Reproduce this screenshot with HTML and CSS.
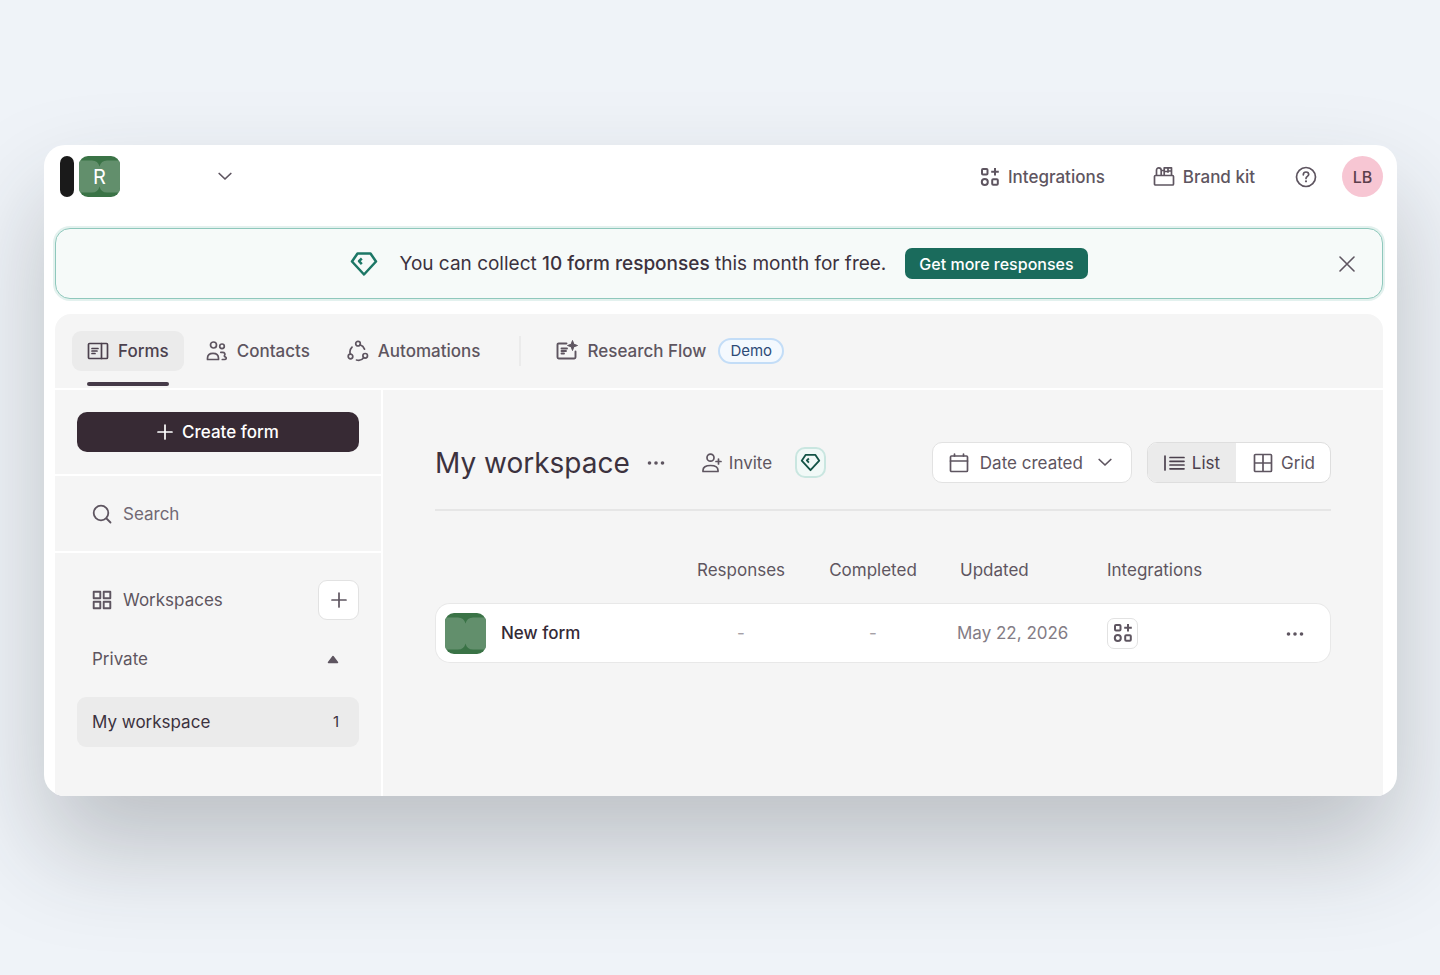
FILE: index.html
```html
<!DOCTYPE html>
<html lang="en">
<head>
<meta charset="utf-8">
<meta name="viewport" content="width=device-width, initial-scale=1">
<title>My workspace</title>
<link rel="stylesheet" href="styles.css">
</head>
<body>
<svg class="sprite" aria-hidden="true">
  <symbol id="apps" viewBox="0 0 20 20"><g fill="none" stroke="currentColor" stroke-width="2"><rect x="2" y="2" width="5.5" height="5.5" rx="1"/><path d="M15 1v7.500M11.200 4.700h7.600"/><circle cx="4.800" cy="15" r="3"/><rect x="12.200" y="12.200" width="5.600" height="5.600" rx="1"/></g></symbol>
  <symbol id="gem" viewBox="0 0 28 26"><g fill="none" stroke="currentColor" stroke-width="2.500" stroke-linejoin="round"><path d="M7.500 2.500h13L26 10.500 14 23.500 2 10.500z"/><path d="M11.800 7.500 9 10.200l2.800 3"/></g></symbol>
  <symbol id="plus" viewBox="0 0 16 16"><path d="M8 1v14M1 8h14" fill="none" stroke="currentColor" stroke-width="1.700" stroke-linecap="round"/></symbol>
  <symbol id="chevron" viewBox="0 0 14 9"><path d="m1.200 1.500 5.800 5.500 5.800-5.500" fill="none" stroke="currentColor" stroke-width="1.700" stroke-linecap="round" stroke-linejoin="round"/></symbol>
  <symbol id="dots" viewBox="0 0 18 6"><g fill="currentColor"><circle cx="2.500" cy="3" r="1.800"/><circle cx="9" cy="3" r="1.800"/><circle cx="15.500" cy="3" r="1.800"/></g></symbol>
  <symbol id="tile" viewBox="0 0 41 41"><rect width="41" height="41" fill="#3a7346"/><path d="M0 4.500h13c4 0 6.500 2 7.500 6 1-4 3.500-6 7.500-6h13v32H28c-4 0-6.500-2-7.500-6-1 4-3.500 6-7.500 6H0z" fill="#628f6c"/></symbol>
</svg>
<div class="window">
  <header class="topbar">
    <div class="account">
      <span class="rail"></span>
      <span class="org"><svg class="org-art"><use href="#tile"/></svg><span class="org-letter">R</span></span>
      <button class="plain org-toggle" aria-label="Switch account"><svg class="ico-chevron"><use href="#chevron"/></svg></button>
    </div>
    <nav class="top-links">
      <a class="top-link" href="#"><svg class="ico-20"><use href="#apps"/></svg>Integrations</a>
      <a class="top-link" href="#"><svg class="ico-22" viewBox="0 0 22 22"><g fill="none" stroke="currentColor" stroke-width="1.700" stroke-linejoin="round"><rect x="1.500" y="9.500" width="19" height="9.500" rx="1"/><path d="M3.500 9.500V4.300C3.500 2.800 4.500 1.800 5.800 1.800s2.400 1 2.400 2.500v5.200M8.200 4.500h3M11.200 9.500V1.800h7.300v7.700M11.200 5.500h3.300M15 1.800v5M15 5h3.300"/></g></svg>Brand kit</a>
      <button class="plain help" aria-label="Help"><svg class="ico-22" viewBox="0 0 22 22"><circle cx="11" cy="11" r="9.500" fill="none" stroke="currentColor" stroke-width="1.700"/><path d="M8.300 8.800C8.300 7 9.400 6 11 6s2.700 1 2.700 2.500c0 1.900-2.700 2-2.700 4" fill="none" stroke="currentColor" stroke-width="1.700" stroke-linecap="round"/><circle cx="11" cy="15.300" r="1.100" fill="currentColor"/></svg></button>
      <button class="plain avatar">LB</button>
    </nav>
  </header>

  <section class="banner">
    <svg class="banner-gem"><use href="#gem"/></svg>
    <p class="banner-text">You can collect <strong>10 form responses</strong> this month for free.</p>
    <button class="plain upgrade">Get more responses</button>
    <button class="plain banner-close" aria-label="Dismiss"><svg class="ico-16" viewBox="0 0 16 16"><path d="m1 1 14 14M15 1 1 15" fill="none" stroke="currentColor" stroke-width="1.600" stroke-linecap="round"/></svg></button>
  </section>

  <div class="panel">
    <nav class="tabs">
      <a class="tab tab-active" href="#"><svg class="ico-22" viewBox="0 0 22 22"><g fill="none" stroke="currentColor" stroke-width="1.700" stroke-linejoin="round" stroke-linecap="round"><rect x="1.500" y="3.500" width="19" height="15" rx="1"/><path d="M14.500 3.500v15M5 8.500h6M5 11h5M5 13.500h3"/></g></svg>Forms</a>
      <a class="tab" href="#"><svg class="ico-22" viewBox="0 0 22 22"><g fill="none" stroke="currentColor" stroke-width="1.700" stroke-linejoin="round" stroke-linecap="round"><circle cx="7.500" cy="5" r="3"/><path d="M1.500 19.500v-1.300c0-3 2.200-4.900 5.500-4.900s5.500 1.900 5.500 4.900v1.300z"/><circle cx="16" cy="6.300" r="2.300"/><path d="M14.800 12.300h1.700c2.300 0 3 1.700 2 3.200-.5.800.2 1.200 1 1.500 1.200.5 1 2.500-1 2.500h-2.200"/></g></svg>Contacts</a>
      <a class="tab" href="#"><svg class="ico-22" viewBox="0 0 22 22"><g fill="none" stroke="currentColor" stroke-width="1.700" stroke-linecap="round"><circle cx="11" cy="3.700" r="2.300"/><circle cx="3.500" cy="16.500" r="2.300"/><circle cx="18.200" cy="15.800" r="2.300"/><path d="M13 4.800c2.300.8 3.800 2.300 4.500 4.300M3.300 14C2.500 11.500 3.200 9 5 7.200M9.500 20c2.800.8 5.500 0 7.200-2.300"/></g></svg>Automations</a>
      <span class="tab-rule"></span>
      <a class="tab tab-flow" href="#"><svg class="ico-22" viewBox="0 0 22 22"><g fill="none" stroke="currentColor" stroke-width="1.900" stroke-linecap="round" stroke-linejoin="round"><path d="M10.500 3.500H2.700c-.7 0-1.200.4-1.200 1.200v12.600c0 .8.500 1.200 1.200 1.200h15.600c.7 0 1.200-.4 1.200-1.200v-5.800"/><path d="M5.500 8.500h5.500M5.500 11h4.500M5.500 13.500h2.500"/></g><path d="m16.500.5 1.300 3.700 3.700 1.300-3.700 1.300-1.300 3.700-1.300-3.700-3.700-1.300 3.700-1.300z" fill="currentColor" stroke="currentColor" stroke-linejoin="round"/></svg>Research Flow<span class="demo">Demo</span></a>
    </nav>

    <div class="body">
      <aside class="sidebar">
        <div class="side-create"><button class="plain create"><svg class="ico-16"><use href="#plus"/></svg>Create form</button></div>
        <label class="side-search"><svg class="ico-20" viewBox="0 0 20 20"><g fill="none" stroke="currentColor" stroke-width="1.800" stroke-linecap="round"><circle cx="9" cy="9" r="7.300"/><path d="m14.500 14.500 4 4"/></g></svg><input class="search-input" type="search" placeholder="Search" aria-label="Search"></label>
        <div class="side-list">
          <div class="side-head">
            <svg class="ico-20" viewBox="0 0 20 20"><g fill="none" stroke="currentColor" stroke-width="1.900" stroke-linejoin="round"><rect x="1.700" y="1.700" width="6.600" height="6.600"/><rect x="11.700" y="1.700" width="6.600" height="6.600"/><rect x="1.700" y="11.700" width="6.600" height="6.600"/><rect x="11.700" y="11.700" width="6.600" height="6.600"/></g></svg>
            <span>Workspaces</span>
            <button class="plain add" aria-label="Add workspace"><svg class="ico-16"><use href="#plus"/></svg></button>
          </div>
          <button class="plain group"><span>Private</span><svg class="caret" viewBox="0 0 12 9"><path d="M6 1.500 10.500 7.500h-9z" fill="currentColor" stroke="currentColor" stroke-width="1.500" stroke-linejoin="round"/></svg></button>
          <a class="space" href="#"><span>My workspace</span><span class="count">1</span></a>
        </div>
      </aside>

      <main class="main">
        <div class="main-head">
          <h1 class="title">My workspace</h1>
          <button class="plain more" aria-label="Workspace options"><svg class="ico-dots"><use href="#dots"/></svg></button>
          <button class="plain invite"><svg class="ico-20" viewBox="0 0 20 20"><g fill="none" stroke="currentColor" stroke-width="1.700" stroke-linejoin="round" stroke-linecap="round"><circle cx="8.500" cy="4.700" r="3.500"/><path d="M1 18.500v-1.200c0-3 2.600-4.800 7.500-4.800s7.500 1.800 7.500 4.800v1.200z"/><path d="M16.500 6v5M14 8.500h5"/></g></svg>Invite</button>
          <button class="plain gem-chip" aria-label="Upgrade"><svg class="chip-gem"><use href="#gem"/></svg></button>
          <div class="controls">
            <label class="sort"><svg class="ico-20" viewBox="0 0 20 20"><g fill="none" stroke="currentColor" stroke-width="1.700" stroke-linecap="round" stroke-linejoin="round"><rect x="1.500" y="3" width="17" height="15.500" rx="1"/><path d="M1.500 8h17M5.500 1v2M14.500 1v2"/></g></svg><select class="sort-select" aria-label="Sort by"><option>Date created</option></select><svg class="ico-chevron"><use href="#chevron"/></svg></label>
            <div class="view" role="group" aria-label="View">
              <button class="plain view-btn view-on" aria-pressed="true"><svg class="ico-22" viewBox="0 0 22 22"><path d="M2 4v14M7 5.500h14M7 9.300h14M7 13h14M7 16.800h14" fill="none" stroke="currentColor" stroke-width="1.700" stroke-linecap="round"/></svg>List</button>
              <button class="plain view-btn" aria-pressed="false"><svg class="ico-20" viewBox="0 0 20 20"><path d="M1.500 2.500a1 1 0 0 1 1-1h15a1 1 0 0 1 1 1v15a1 1 0 0 1-1 1h-15a1 1 0 0 1-1-1zM10 1.500v17M1.500 10h17" fill="none" stroke="currentColor" stroke-width="1.700"/></svg>Grid</button>
            </div>
          </div>
        </div>
        <table class="forms">
          <colgroup><col><col class="c-num"><col class="c-num"><col class="c-date"><col class="c-int"><col class="c-more"></colgroup>
          <thead><tr><th></th><th class="mid">Responses</th><th class="mid">Completed</th><th class="upd">Updated</th><th>Integrations</th><th></th></tr></thead>
          <tbody><tr>
            <td><a class="form-link" href="#"><svg class="form-art"><use href="#tile"/></svg>New form</a></td>
            <td class="mid faint">-</td><td class="mid faint">-</td><td class="date">May 22, 2026</td>
            <td><button class="plain int-btn" aria-label="Add integration"><svg class="ico-20"><use href="#apps"/></svg></button></td>
            <td class="mid"><button class="plain more" aria-label="Form options"><svg class="ico-dots"><use href="#dots"/></svg></button></td>
          </tr></tbody>
        </table>
      </main>
    </div>
  </div>
</div>
</body>
</html>
```
FILE: styles.css
```css
* { box-sizing: border-box; }
body {
  margin: 0;
  min-height: 100vh;
  padding: 145px 43px 179px 44px;
  background: #eff3f8;
  color: #5e5560;
  font: 400 17px/24px Inter, "Liberation Sans", sans-serif;
}
.sprite { position: absolute; width: 0; height: 0; }
svg { flex: none; display: block; }
a { color: inherit; text-decoration: none; }
.plain { margin: 0; padding: 0; border: 0; background: none; color: inherit; font: inherit; cursor: pointer; }
.ico-16 { width: 16px; height: 16px; }
.ico-20 { width: 20px; height: 20px; }
.ico-22 { width: 22px; height: 22px; }
.ico-chevron { width: 14px; height: 9px; }
.ico-dots { width: 18px; height: 6px; }

.window {
  overflow: hidden;
  border-radius: 21px;
  background: #fff;
  box-shadow: 0 52px 100px rgba(40, 44, 48, .25);
}

/* Top bar */
.topbar { display: flex; align-items: center; justify-content: space-between; padding: 11px 14px 11px 16px; }
.account { display: flex; align-items: center; }
.rail { width: 14px; height: 41px; border-radius: 7px; background: #1a1a1a; }
.org { display: grid; place-items: center; width: 41px; height: 41px; margin-left: 5px; overflow: hidden; border-radius: 9px; color: #fff; font-size: 20px; }
.org > * { grid-area: 1 / 1; }
.org-art { width: 41px; height: 41px; }
.org-toggle { margin-left: 98px; }
.top-links { display: flex; align-items: center; font-weight: 500; }
.top-link { display: flex; align-items: center; gap: 8px; margin-right: 48px; }
.top-link + .top-link { margin-right: 40px; }
.help { margin-right: 25px; }
.avatar { width: 41px; height: 41px; border-radius: 50%; background: #f7c6d3; color: #5c3f4c; font-size: 16px; font-weight: 500; }

/* Banner */
.banner {
  display: flex;
  position: relative;
  align-items: center;
  justify-content: center;
  height: 71px;
  margin: 20px 14px 0 11px;
  border: 1px solid #8fc8bc;
  border-radius: 15px;
  background: #f6faf9;
  box-shadow: 0 0 0 2px #e3f1ee;
  color: #3c323e;
  font-size: 19px;
}
.banner-gem { width: 28px; height: 26px; margin-right: 21px; color: #1c7766; }
.banner-text { margin: 0; }
.banner-text strong { font-weight: 500; }
.upgrade { height: 31px; margin-left: 19px; padding: 0 14px; border-radius: 7px; background: #1a6b5c; color: #fff; font-size: 16px; font-weight: 500; }
.banner-close { position: absolute; right: 27px; color: #5e5560; }

/* Panel */
.panel { margin: 15px 14px 0 11px; border-radius: 16px 16px 0 0; background: #f5f5f5; }
.tabs { display: flex; align-items: flex-start; padding: 17px 17px 0; border-bottom: 2px solid #fff; font-weight: 500; }
.tab { display: flex; align-items: center; gap: 9px; height: 40px; margin-bottom: 17px; padding: 0 15px; }
.tab + .tab { margin-left: 7px; }
.tab-active { position: relative; border-radius: 9px; background: #ebebeb; color: #4c414e; }
.tab-active::after { content: ""; position: absolute; right: 15px; bottom: -15px; left: 15px; height: 4px; border-radius: 2px; background: #463b49; }
.tab-rule { width: 2px; height: 30px; margin: 5px 20px 0 24px; background: #ebebeb; }
.demo { margin-left: 3px; padding: 0 10px; border: 2px solid #c3ddf7; border-radius: 13px; background: #f4f9fe; color: #2d4b77; font-size: 15px; font-weight: 400; line-height: 22px; }
.body { display: flex; align-items: stretch; }

/* Sidebar */
.sidebar { width: 328px; flex: none; border-right: 2px solid #fff; }
.side-create { padding: 22px; border-bottom: 2px solid #fff; }
.create { display: flex; align-items: center; justify-content: center; gap: 9px; width: 100%; height: 40px; border-radius: 10px; background: #372a34; color: #fff; font-weight: 500; }
.side-search { display: flex; align-items: center; gap: 11px; height: 77px; padding: 0 22px 0 37px; border-bottom: 2px solid #fff; }
.search-input { min-width: 0; flex: 1; padding: 0; border: 0; outline: 0; background: none; color: inherit; font: inherit; }
.search-input::placeholder { color: #716974; opacity: 1; }
.side-list { padding: 27px 22px 49px; }
.side-head { display: flex; align-items: center; gap: 11px; padding-left: 15px; }
.add { display: grid; place-items: center; width: 41px; height: 40px; margin-left: auto; border: 1px solid #e2e2e2; border-radius: 9px; background: #fff; }
.group { display: flex; align-items: center; justify-content: space-between; width: 100%; margin-top: 27px; padding: 0 20px 0 15px; }
.caret { width: 12px; height: 9px; }
.space { display: flex; align-items: center; justify-content: space-between; height: 50px; margin-top: 26px; padding: 0 20px 0 15px; border-radius: 9px; background: #ebebeb; color: #3c323e; }
.count { font-size: 15px; }

/* Main */
.main { min-width: 0; flex: 1; padding: 52px 52px 0; }
.main-head { display: flex; align-items: center; padding-bottom: 26px; border-bottom: 2px solid #e6e6e6; }
.title { margin: 0 17px 0 0; color: #3c323e; font-size: 28px; font-weight: 400; line-height: 40px; }
.invite { display: flex; align-items: center; gap: 7px; margin-left: 37px; }
.gem-chip { display: grid; place-items: center; width: 31px; height: 31px; margin-left: 23px; border: 2px solid #c9e6e0; border-radius: 10px; background: #f1f9f7; color: #145346; }
.chip-gem { width: 21px; height: 19px; }
.controls { display: flex; gap: 15px; margin-left: auto; }
.sort { display: flex; align-items: center; height: 41px; padding: 0 19px 0 16px; border: 1px solid #e2e2e2; border-radius: 10px; background: #fff; }
.sort-select { margin: 0 14px 0 11px; padding: 0; border: 0; appearance: none; background: none; color: inherit; font: inherit; }
.view { display: flex; overflow: hidden; border: 1px solid #dedede; border-radius: 10px; background: #fff; }
.view-btn { display: flex; align-items: center; gap: 8px; padding: 0 15px 0 17px; }
.view-on { gap: 7px; padding: 0 16px 0 15px; background: #ebebeb; color: #4c414e; }

/* Forms table */
.forms { width: 100%; margin-top: 47px; border-spacing: 0; table-layout: fixed; }
.c-num { width: 132px; }
.c-date { width: 150px; }
.c-int { width: 171px; }
.c-more { width: 71px; }
.forms th { padding: 0 0 21px 18px; font-weight: 400; text-align: left; }
.forms td { height: 60px; padding: 0 0 0 18px; border: solid #e8e8e8; border-width: 1px 0; background: #fff; }
.forms td:first-child { padding-left: 9px; border-left-width: 1px; border-radius: 15px 0 0 15px; }
.forms td:last-child { border-right-width: 1px; border-radius: 0 15px 15px 0; }
.forms .mid { padding-left: 0; padding-right: 0; text-align: center; }
.forms .date { color: #837c85; }
.forms .faint { color: #a5a0a6; }
.forms .upd { padding-left: 21px; }
.form-link { display: flex; align-items: center; gap: 15px; color: #342a36; font-weight: 500; }
.form-art { width: 41px; height: 41px; border-radius: 9px; }
.int-btn { display: grid; place-items: center; width: 31px; height: 31px; border: 1px solid #e2e2e2; border-radius: 7px; }
.forms .more { display: inline-block; vertical-align: middle; }
```
